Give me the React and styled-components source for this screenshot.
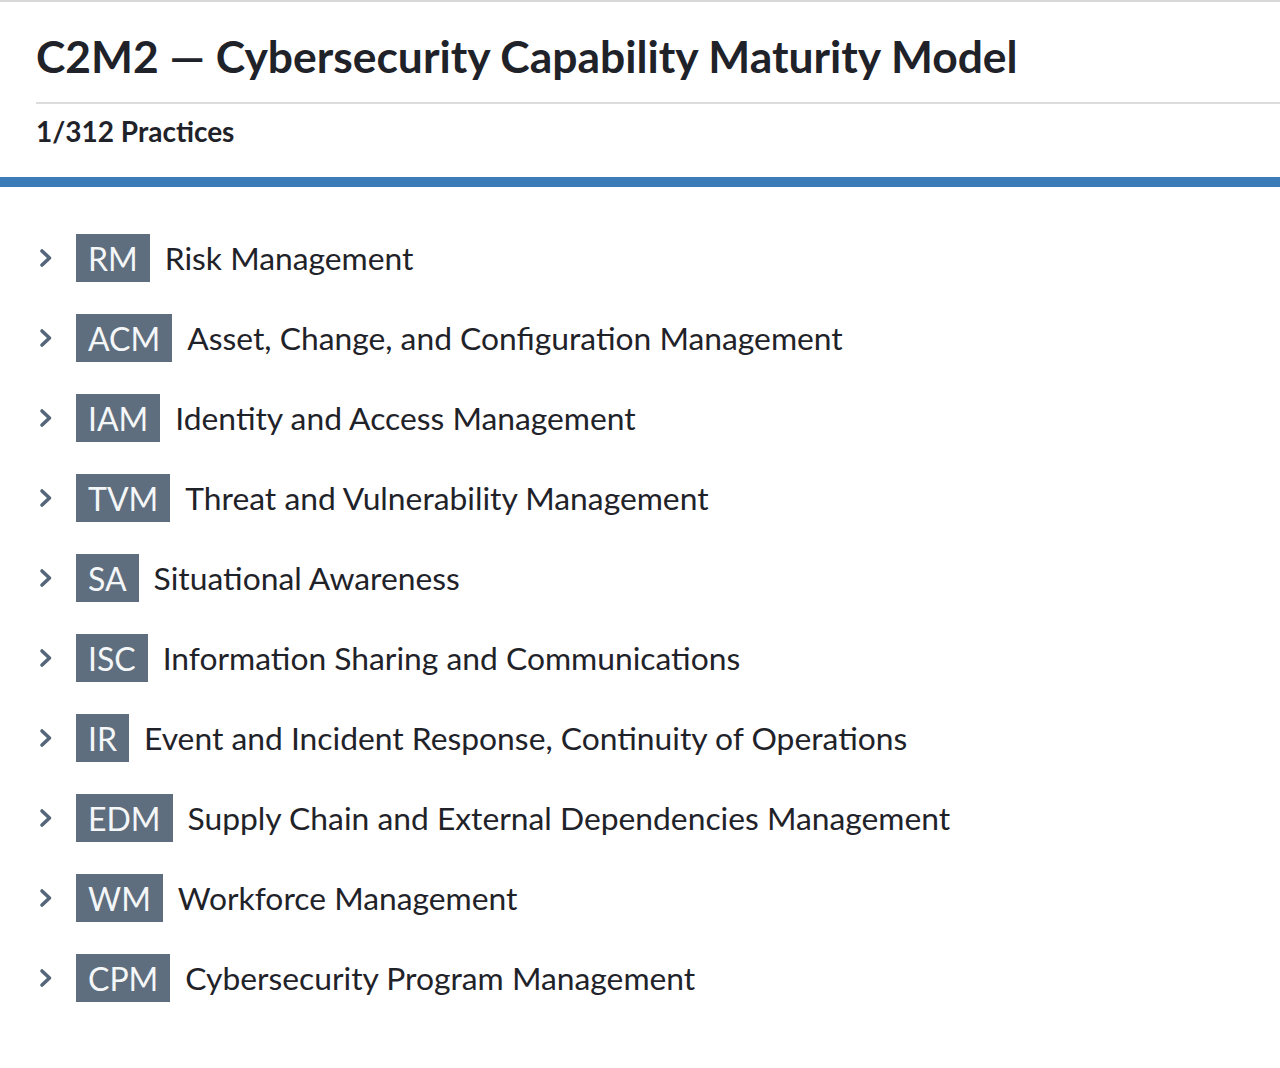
import React from 'react'
import styled, { createGlobalStyle } from 'styled-components'

const GlobalStyle = createGlobalStyle`
    html, body {
        margin: 0;
        padding: 0;
        background: #ffffff;
    }
    body {
        font-family: Lato, "Open Sans", sans-serif;
        color: #1f2329;
    }
`

const Page = styled.div`
    border-top: 2px solid #d8d8d8;
    min-height: 1066px;
`

const Header = styled.header`
    padding: 0 0 0 36px;
`

const Title = styled.h1`
    margin: 0;
    padding: 28px 0 20px 0;
    font-size: 44.4px;
    line-height: 52px;
    font-weight: 700;
    color: #1f2329;
`

const Divider = styled.hr`
    margin: 0;
    border: 0;
    border-top: 2px solid #dcdcdc;
`

const Count = styled.div`
    padding: 10px 0 29px 0;
    font-size: 28px;
    line-height: 34px;
    font-weight: 700;
    color: #1f2329;
`

const Bar = styled.div`
    height: 10px;
    background: #3a7bb8;
`

const List = styled.ul`
    list-style: none;
    margin: 0;
    padding: 47px 0 0 38px;
    display: flex;
    flex-direction: column;
    gap: 32px;
`

const Row = styled.li`
    display: flex;
    align-items: center;
    height: 48px;
`

const Chevron = styled.svg`
    width: 16px;
    height: 22px;
    margin-right: 22px;
    flex-shrink: 0;
`

const Badge = styled.span`
    display: inline-flex;
    align-items: center;
    height: 48px;
    padding: 0 12px;
    background: #5e6e7e;
    color: #f4f6f8;
    font-size: 32px;
    margin-right: 15px;
`

const Name = styled.span`
    font-size: 31.8px;
    color: #1f2329;
`

const domains = [
    ['RM', 'Risk Management'],
    ['ACM', 'Asset, Change, and Configuration Management'],
    ['IAM', 'Identity and Access Management'],
    ['TVM', 'Threat and Vulnerability Management'],
    ['SA', 'Situational Awareness'],
    ['ISC', 'Information Sharing and Communications'],
    ['IR', 'Event and Incident Response, Continuity of Operations'],
    ['EDM', 'Supply Chain and External Dependencies Management'],
    ['WM', 'Workforce Management'],
    ['CPM', 'Cybersecurity Program Management'],
]

const Domain = ({ code, name }) => (
    <Row>
        <Chevron viewBox="0 0 16 22">
            <path d="M4 4 L11.5 11 L4 18" fill="none" stroke="#56667a" strokeWidth="3.6" strokeLinecap="round" strokeLinejoin="round" />
        </Chevron>
        <Badge>{code}</Badge>
        <Name>{name}</Name>
    </Row>
)

const App = () => (
    <Page>
        <GlobalStyle />
        <Header>
            <Title>C2M2 — Cybersecurity Capability Maturity Model</Title>
            <Divider />
            <Count>1/312 Practices</Count>
        </Header>
        <Bar />
        <List>
            {domains.map(([code, name]) => (
                <Domain key={code} code={code} name={name} />
            ))}
        </List>
    </Page>
)

export default App
